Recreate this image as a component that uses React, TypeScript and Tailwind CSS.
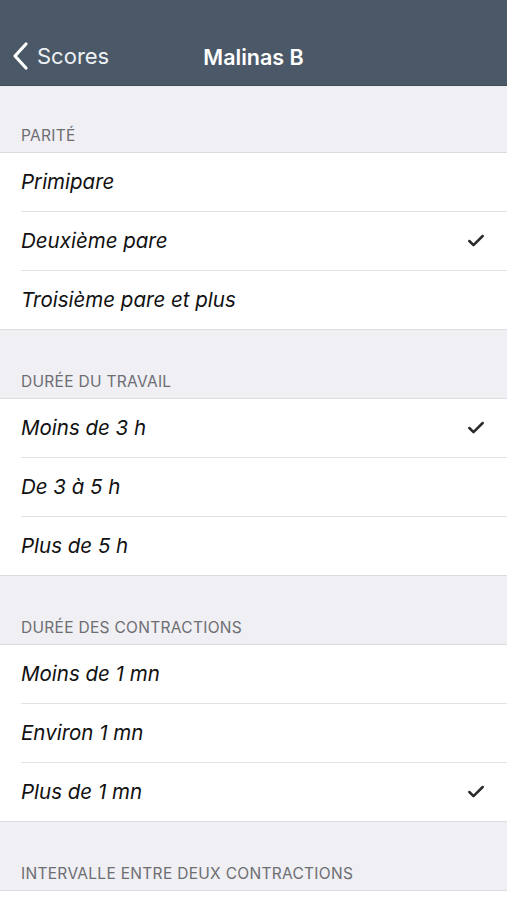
import { Check } from 'lucide-react'

type Section = {
  title: string
  options: string[]
  selected: number
}

const sections: Section[] = [
  { title: 'Parité', options: ['Primipare', 'Deuxième pare', 'Troisième pare et plus'], selected: 1 },
  { title: 'Durée du travail', options: ['Moins de 3 h', 'De 3 à 5 h', 'Plus de 5 h'], selected: 0 },
  { title: 'Durée des contractions', options: ['Moins de 1 mn', 'Environ 1 mn', 'Plus de 1 mn'], selected: 2 },
]

const font = { fontFamily: 'Inter, "Liberation Sans", sans-serif' }

export default function App() {
  return (
    <div className="w-[507px] h-[900px] overflow-hidden bg-[#efeff4]" style={font}>
      {/* Nav bar */}
      <div className="h-[86px] bg-[#4a5867] flex items-end pb-[14px] relative border-b border-[#3f4b58]">
        <div className="flex items-center pl-[11px] text-white">
          <svg width="18" height="30" viewBox="0 0 18 30" fill="none">
            <path d="M15 3 L4 15 L15 27" stroke="white" strokeWidth="3.2" strokeLinecap="round" strokeLinejoin="round" />
          </svg>
          <span className="ml-[8px] text-[22px] leading-[28px] text-[#eef1f4]">Scores</span>
        </div>
        <div className="absolute left-0 right-0 bottom-[14px] flex justify-center pointer-events-none">
          <span className="text-[21.5px] leading-[28px] font-semibold text-white">Malinas B</span>
        </div>
      </div>

      {sections.map((s, si) => (
        <div key={s.title}>
          <div className={`${si === 0 ? 'h-[66px]' : 'h-[68px]'} flex items-end pl-[21px] pb-[7px]`}>
            <span className="uppercase text-[15.5px] leading-[18px] text-[#6d6d72] tracking-[0.3px]">{s.title}</span>
          </div>
          <div className="bg-white border-y border-[#dcdce0]">
            {s.options.map((o, oi) => (
              <div key={o} className="pl-[21px] h-[59px] last:h-[58px] flex">
                <div
                  className={`flex-1 flex items-center pr-[21px] ${
                    oi < s.options.length - 1 ? 'border-b border-[#e2e2e6]' : ''
                  }`}
                >
                  <span className="flex-1 italic text-[20.5px] text-[#111]">{o}</span>
                  {oi === s.selected && <Check className="w-[20px] h-[20px] text-[#2a2a2a]" strokeWidth={3} />}
                </div>
              </div>
            ))}
          </div>
        </div>
      ))}

      {/* Next section, cut by the screen edge */}
      <div className="h-[68px] flex items-end pl-[21px] pb-[7px]">
        <span className="uppercase text-[15.5px] leading-[18px] text-[#6d6d72] tracking-[0.3px]">
          Intervalle entre deux contractions
        </span>
      </div>
      <div className="bg-white border-t border-[#dcdce0] h-[60px]" />
    </div>
  )
}
